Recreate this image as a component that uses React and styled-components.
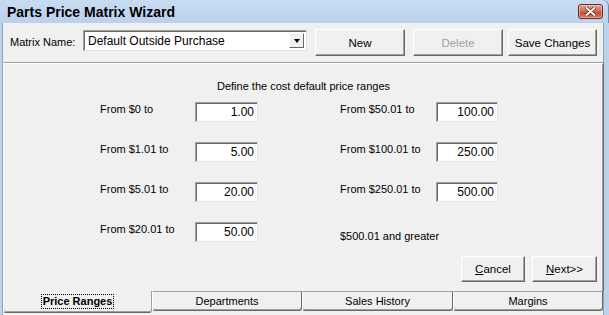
import React from 'react';
import styled, { createGlobalStyle } from 'styled-components';

const GlobalStyle = createGlobalStyle`
  body {
    margin: 0;
    font-family: "Liberation Sans", Arial, sans-serif;
    background: #ffffff;
  }
`;

const Window = styled.div`
  width: 609px;
  height: 315px;
  box-sizing: border-box;
  display: flex;
  flex-direction: column;
  background: #bcd3eb;
  overflow: hidden;
`;

const TitleBar = styled.div`
  height: 23px;
  flex: none;
  display: flex;
  align-items: center;
  justify-content: space-between;
  padding: 0 6px 0 7px;
  background: linear-gradient(#c8dcf1, #b9d1ea);
  border-top-right-radius: 6px;
  box-shadow: inset -1px 0 #6f8aa8;
`;

const Title = styled.span`
  font-size: 14px;
  font-weight: bold;
  color: #000;
  padding-top: 1px;
`;

const CloseButton = styled.div`
  width: 25px;
  height: 15px;
  box-sizing: border-box;
  display: flex;
  align-items: center;
  justify-content: center;
  border: 1px solid #6b2a22;
  border-radius: 3px;
  background: linear-gradient(#e8a493, #d06a55 50%, #c3452d 51%, #d47e64);
  box-shadow: inset 0 0 0 1px rgba(255, 255, 255, 0.35);
`;

const Body = styled.div`
  flex: 1;
  display: flex;
  flex-direction: column;
  margin: 0 5px 0 2px;
  background: #f0f0f0;
  box-shadow: inset 1px 0 #8ea6c0, inset -1px 0 #8ea6c0;
`;

const Toolbar = styled.div`
  height: 39px;
  flex: none;
  display: flex;
  align-items: flex-start;
  padding: 6px 0 0 8px;
  box-sizing: border-box;
  font-size: 11px;
`;

const ToolLabel = styled.span`
  width: 73px;
  padding-top: 7px;
  color: #000;
`;

const Combo = styled.div`
  width: 224px;
  height: 21px;
  margin-top: 1px;
  box-sizing: border-box;
  display: flex;
  align-items: center;
  justify-content: space-between;
  background: #fff;
  border-style: solid;
  border-width: 1px;
  border-color: #a0a0a0 #e3e3e3 #e3e3e3 #a0a0a0;
  box-shadow: inset 1px 1px #696969;
  padding: 0 2px 0 4px;
  font-size: 12px;
`;

const DropButton = styled.div`
  width: 15px;
  height: 15px;
  box-sizing: border-box;
  display: flex;
  align-items: center;
  justify-content: center;
  background: #f0f0f0;
  border-style: solid;
  border-width: 1px;
  border-color: #fff #696969 #696969 #fff;
`;

const Arrow = styled.span`
  width: 0;
  height: 0;
  border-left: 3px solid transparent;
  border-right: 3px solid transparent;
  border-top: 4px solid #000;
`;

const Button = styled.button`
  width: ${p => p.w}px;
  height: ${p => p.h || 27}px;
  margin-left: ${p => p.gap || 0}px;
  box-sizing: border-box;
  padding: 0;
  background: #f0f0f0;
  border-style: solid;
  border-width: 1px;
  border-color: #fff #696969 #696969 #fff;
  box-shadow: inset -1px -1px #a0a0a0;
  font-family: "Liberation Sans", Arial, sans-serif;
  font-size: 11.5px;
  color: ${p => (p.disabled ? '#a0a0a0' : '#000')};
  u {
    text-decoration: underline;
  }
`;

const Panel = styled.div`
  flex: 1;
  margin-left: 1px;
  display: flex;
  flex-direction: column;
  border-style: solid;
  border-width: 1px 1px 0 1px;
  border-color: #a0a0a0 #696969 transparent #fff;
  box-shadow: inset 0 1px #fff, inset -1px 0 #a0a0a0;
  font-size: 11px;
  color: #000;
`;

const Heading = styled.div`
  text-align: center;
  padding-top: 17px;
  line-height: 13px;
  height: 13px;
`;

const Columns = styled.div`
  display: flex;
  padding: 9px 0 0 96px;
`;

const Column = styled.div`
  width: ${p => p.w}px;
  display: flex;
  flex-direction: column;
  gap: 20px;
`;

const Row = styled.div`
  display: flex;
  height: 20px;
  align-items: flex-start;
`;

const Label = styled.span`
  width: ${p => p.w}px;
  line-height: 13px;
  padding-top: ${p => p.top || 1}px;
`;

const ValueBox = styled.div`
  width: ${p => p.w}px;
  height: 20px;
  box-sizing: border-box;
  background: #fff;
  border-style: solid;
  border-width: 1px;
  border-color: #a0a0a0 #e3e3e3 #e3e3e3 #a0a0a0;
  box-shadow: inset 1px 1px #696969;
  text-align: right;
  font-size: 12px;
  line-height: 18px;
  padding-right: 3px;
`;

const Actions = styled.div`
  margin-top: auto;
  display: flex;
  justify-content: flex-end;
  padding: 0 6px 9px 0;
`;

const TabStrip = styled.div`
  height: 24px;
  flex: none;
  display: flex;
  font-size: 11px;
`;

const Tab = styled.div`
  width: ${p => p.w}px;
  height: ${p => (p.active ? 22 : 20)}px;
  box-sizing: border-box;
  display: flex;
  align-items: center;
  justify-content: center;
  background: #f0f0f0;
  border-style: solid;
  border-width: ${p => (p.active ? '0 1px 1px 1px' : '1px 1px 1px 1px')};
  border-color: ${p => (p.active ? 'transparent #a0a0a0 #696969 #fff' : '#a0a0a0 #696969 #696969 #fff')};
  border-radius: 0 0 3px 3px;
  box-shadow: inset 0 -1px #a0a0a0;
  margin-left: ${p => (p.active ? 1 : 0)}px;
  font-weight: ${p => (p.active ? 'bold' : 'normal')};
`;

const Focus = styled.span`
  outline: 1px dotted #000;
  padding: 0 1px;
  line-height: 13px;
`;

const leftRows = [
  ['From $0 to', '1.00'],
  ['From $1.01 to', '5.00'],
  ['From $5.01 to', '20.00'],
  ['From $20.01 to', '50.00'],
];

const rightRows = [
  ['From $50.01 to', '100.00'],
  ['From $100.01 to', '250.00'],
  ['From $250.01 to', '500.00'],
];

const App = () => (
  <>
    <GlobalStyle />
    <Window>
      <TitleBar>
        <Title>Parts Price Matrix Wizard</Title>
        <CloseButton>
          <svg width="11" height="9" viewBox="0 0 11 9">
            <path d="M1.5 1 L9.5 8 M9.5 1 L1.5 8" stroke="#5a1a12" strokeWidth="3.4" strokeLinecap="round" />
            <path d="M1.5 1 L9.5 8 M9.5 1 L1.5 8" stroke="#fff" strokeWidth="2" strokeLinecap="round" />
          </svg>
        </CloseButton>
      </TitleBar>
      <Body>
        <Toolbar>
          <ToolLabel>Matrix Name:</ToolLabel>
          <Combo>
            <span>Default Outside Purchase</span>
            <DropButton><Arrow /></DropButton>
          </Combo>
          <Button w={90} gap={8}>New</Button>
          <Button w={90} gap={8} disabled>Delete</Button>
          <Button w={89} gap={5}>Save Changes</Button>
        </Toolbar>
        <Panel>
          <Heading>Define the cost default price ranges</Heading>
          <Columns>
            <Column w={240}>
              {leftRows.map(([label, value]) => (
                <Row key={label}>
                  <Label w={95}>{label}</Label>
                  <ValueBox w={63}>{value}</ValueBox>
                </Row>
              ))}
            </Column>
            <Column w={170}>
              {rightRows.map(([label, value]) => (
                <Row key={label}>
                  <Label w={96}>{label}</Label>
                  <ValueBox w={62}>{value}</ValueBox>
                </Row>
              ))}
              <Row>
                <Label w={160} top={8}>$500.01 and greater</Label>
              </Row>
            </Column>
          </Columns>
          <Actions>
            <Button w={64} h={26}><u>C</u>ancel</Button>
            <Button w={65} h={26} gap={7}><u>N</u>ext&gt;&gt;</Button>
          </Actions>
        </Panel>
        <TabStrip>
          <Tab w={149} active><Focus>Price Ranges</Focus></Tab>
          <Tab w={150}>Departments</Tab>
          <Tab w={151}>Sales History</Tab>
          <Tab w={150}>Margins</Tab>
        </TabStrip>
      </Body>
    </Window>
  </>
);

export default App;
